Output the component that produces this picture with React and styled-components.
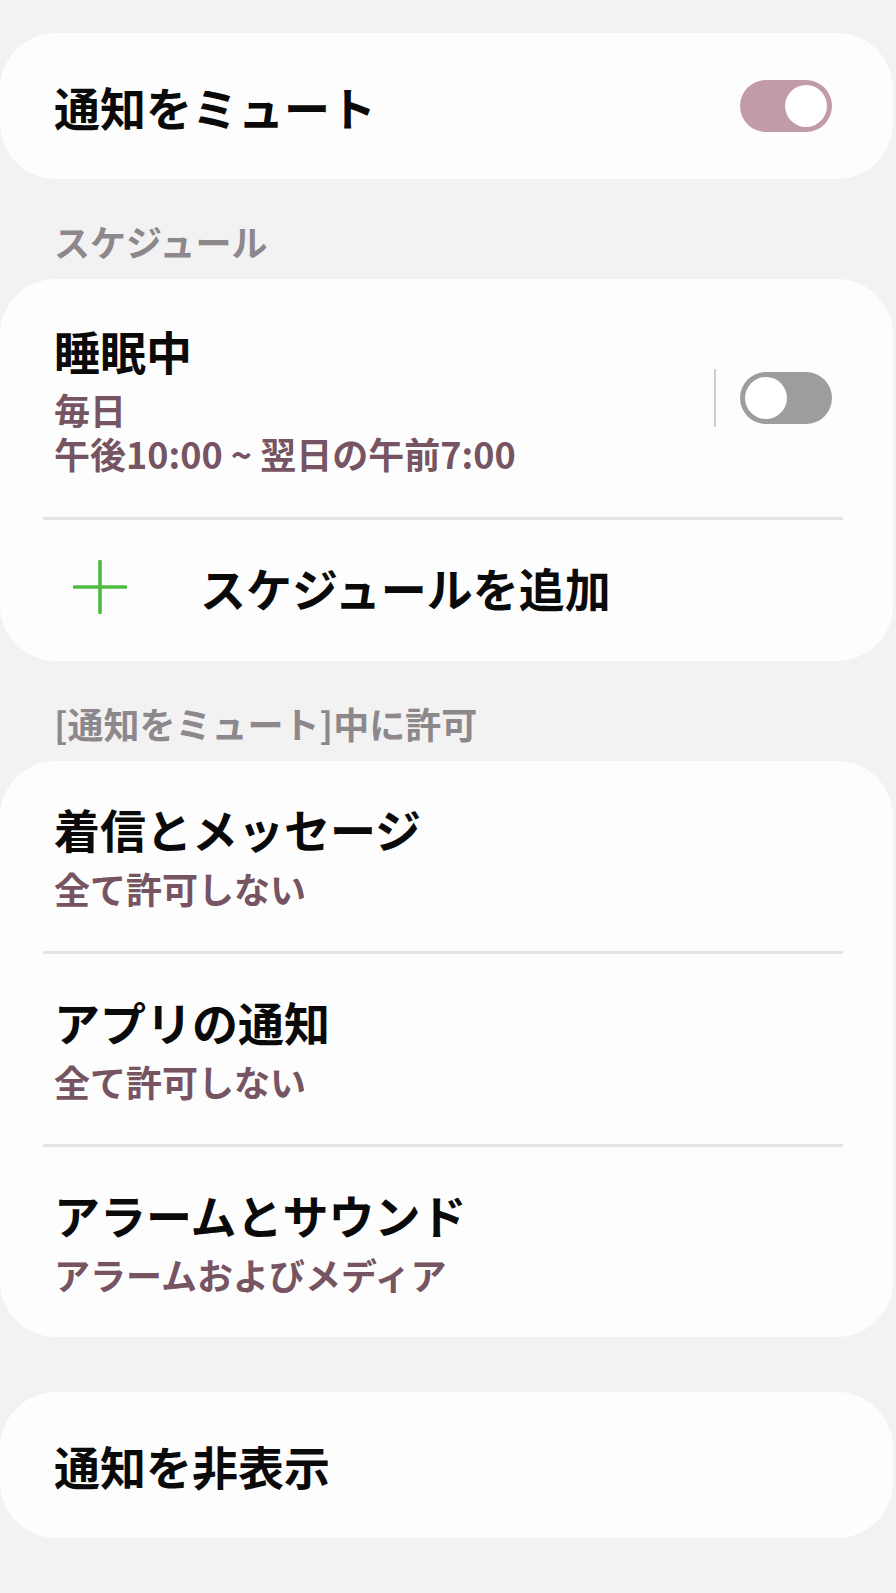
import React from "react";
import styled, { createGlobalStyle } from "styled-components";

const Global = createGlobalStyle`
  html, body { margin: 0; padding: 0; background: #f3f2f3; }
  body { font-family: "Noto Sans CJK JP", "Noto Sans", sans-serif; -webkit-font-smoothing: antialiased; }
  * { box-sizing: border-box; }
`;

const Page = styled.div`
  width: 896px;
  min-height: 1593px;
  padding: 33px 3px 56px 0;
  display: flex;
  flex-direction: column;
  background: #f3f2f3;
`;

const Card = styled.section`
  background: #fdfdfd;
  border-radius: 56px;
  display: flex;
  flex-direction: column;
  margin-top: ${(p) => p.$mt || 0}px;
`;

const Row = styled.div`
  display: flex;
  align-items: center;
  padding: ${(p) => p.$pad || "44px 61px 44px 54px"};
`;

const TextCol = styled.div`
  flex: 1;
  display: flex;
  flex-direction: column;
  gap: ${(p) => p.$gap || 9}px;
`;

const Title = styled.div`
  font-size: 46px;
  line-height: 58px;
  font-weight: 700;
  color: #0a0a0a;
  white-space: nowrap;
`;

const Sub = styled.div`
  font-size: 36px;
  line-height: 44px;
  font-weight: 600;
  color: #765462;
  white-space: pre-line;
`;

const SectionHeader = styled.div`
  font-size: 36px;
  line-height: 45px;
  font-weight: 700;
  color: #8d888b;
  padding: 40px 0 15px 54px;
`;

const Divider = styled.div`
  height: 3px;
  background: #e4e4e4;
  margin: 0 50px 0 43px;
`;

const VRule = styled.div`
  width: 2px;
  height: 58px;
  background: #cfcfcf;
  margin-right: 24px;
`;

const Track = styled.div`
  width: 92px;
  height: 52px;
  border-radius: 26px;
  background: ${(p) => (p.$on ? "#c29ba8" : "#9d9da0")};
  padding: 5px;
  display: flex;
  justify-content: ${(p) => (p.$on ? "flex-end" : "flex-start")};
  flex-shrink: 0;
`;

const Thumb = styled.div`
  width: 42px;
  height: 42px;
  border-radius: 50%;
  background: #ffffff;
`;

const PlusIcon = styled.svg`
  width: 54px;
  height: 54px;
  flex-shrink: 0;
  margin-right: 73px;
`;

const Toggle = ({ on }) => (
  <Track $on={on}>
    <Thumb />
  </Track>
);

export default function App() {
  return (
    <>
      <Global />
      <Page>
        <Card>
          <Row>
            <TextCol>
              <Title>通知をミュート</Title>
            </TextCol>
            <Toggle on />
          </Row>
        </Card>

        <SectionHeader>スケジュール</SectionHeader>
        <Card>
          <Row $pad="42px 61px 42px 54px">
            <TextCol $gap={8}>
              <Title>睡眠中</Title>
              <Sub>{"毎日\n午後10:00 ~ 翌日の午前7:00"}</Sub>
            </TextCol>
            <VRule />
            <Toggle />
          </Row>
          <Divider />
          <Row $pad="38px 61px 45px 73px">
            <PlusIcon viewBox="0 0 54 54">
              <path d="M27 1.5 V52.5 M1.5 27 H52.5" stroke="#4cbb3f" strokeWidth="3.6" strokeLinecap="round" fill="none" />
            </PlusIcon>
            <Title>スケジュールを追加</Title>
          </Row>
        </Card>

        <SectionHeader>[通知をミュート]中に許可</SectionHeader>
        <Card>
          <Row $pad="38px 61px 41px 54px">
            <TextCol>
              <Title>着信とメッセージ</Title>
              <Sub>全て許可しない</Sub>
            </TextCol>
          </Row>
          <Divider />
          <Row $pad="38px 61px 41px 54px">
            <TextCol>
              <Title>アプリの通知</Title>
              <Sub>全て許可しない</Sub>
            </TextCol>
          </Row>
          <Divider />
          <Row $pad="38px 61px 41px 54px">
            <TextCol>
              <Title>アラームとサウンド</Title>
              <Sub>アラームおよびメディア</Sub>
            </TextCol>
          </Row>
        </Card>

        <Card $mt={55}>
          <Row>
            <TextCol>
              <Title>通知を非表示</Title>
            </TextCol>
          </Row>
        </Card>
      </Page>
    </>
  );
}
